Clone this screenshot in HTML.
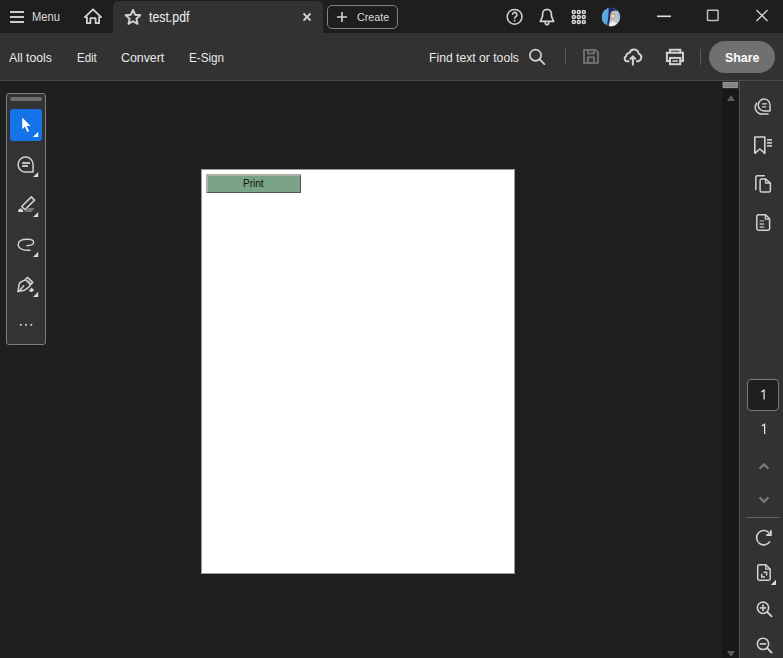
<!DOCTYPE html>
<html><head><meta charset="utf-8">
<style>
*{margin:0;padding:0;box-sizing:border-box}
html,body{width:783px;height:658px;overflow:hidden;background:#1f1f1f;font-family:"Liberation Sans",sans-serif;color:#e6e6e6}
.a{position:absolute}
#title{left:0;top:0;width:783px;height:33px;background:#1e1e1e}
#tab{left:113px;top:1px;width:210px;height:32px;background:#323232;border-radius:5px 5px 0 0}
#toolbar{left:0;top:33px;width:783px;height:47px;background:#323232}
#tbline{left:0;top:80px;width:783px;height:1px;background:#4b4b4b}
.t{position:absolute;white-space:nowrap;line-height:1;transform-origin:0 0}
#ov{position:absolute;left:0;top:0;overflow:visible}
#scroll{left:722px;top:81px;width:17px;height:577px;background:#181818}
#rpanel{left:739px;top:81px;width:44px;height:577px;background:#323232;border-left:1px solid #4f4f4f}
#page{left:201px;top:169px;width:314px;height:405px;background:#fff;border:1px solid #9a9a9a}
#lt{left:6px;top:93px;width:40px;height:252px;background:#333333;border:1px solid #7e7e7e;border-radius:3px}
#create{left:327px;top:5px;width:71px;height:24px;border:1px solid #828282;border-radius:5px}
#share{left:709px;top:41px;width:66px;height:32px;border-radius:16px;background:#707070}
#pbtn{left:206px;top:174px;width:95px;height:19px;background:#7aa385;border-top:2px solid #b3aea6;border-left:2px solid #b3aea6;border-right:1px solid #55524f;border-bottom:1px solid #55524f}
#pinput{left:747px;top:379px;width:32px;height:32px;border:1px solid #7a7a7a;border-radius:4px;background:#1e1e1e}
</style></head><body>
<div id="title" class="a"></div>
<div id="tab" class="a"></div>
<div id="toolbar" class="a"></div>
<div id="tbline" class="a"></div>
<div id="create" class="a"></div>
<div id="share" class="a"></div>

<div id="scroll" class="a"></div>
<div id="rpanel" class="a"></div>
<div id="page" class="a"></div>
<div id="pbtn" class="a"></div>
<div id="lt" class="a"></div>
<div id="pinput" class="a"></div>

<!-- text -->
<div class="t" style="left:32px;top:11px;font-size:12px;color:#dcdcdc;transform:scaleX(.93)">Menu</div>
<div class="t" style="left:149px;top:10px;font-size:14px;color:#eeeeee;transform:scaleX(.88)">test.pdf</div>
<div class="t" style="left:357px;top:12px;font-size:11.5px;color:#dcdcdc;transform:scaleX(.93)">Create</div>

<div class="t" style="left:9px;top:51px;font-size:13.3px;color:#e8e8e8;transform:scaleX(.92)">All tools</div>
<div class="t" style="left:76.5px;top:51px;font-size:13.3px;color:#e8e8e8;transform:scaleX(.86)">Edit</div>
<div class="t" style="left:121px;top:51px;font-size:13.3px;color:#e8e8e8;transform:scaleX(.93)">Convert</div>
<div class="t" style="left:189px;top:51px;font-size:13.3px;color:#e8e8e8;transform:scaleX(.88)">E-Sign</div>
<div class="t" style="left:429px;top:51px;font-size:13.3px;color:#e8e8e8;transform:scaleX(.915)">Find text or tools</div>
<div class="t" style="left:724.5px;top:51px;font-size:13px;font-weight:bold;color:#ffffff;transform:scaleX(.95)">Share</div>

<div class="t" style="left:243px;top:179px;font-size:10px;color:#111">Print</div>


<svg id="ov" width="783" height="658" viewBox="0 0 783 658">
<g fill="none" stroke="#d2d2d2" stroke-width="1.6" stroke-linejoin="round" stroke-linecap="round">
  <!-- hamburger -->
  <path d="M10 12H24M10 17H24M10 22H24" stroke-width="2" stroke-linecap="butt" stroke="#cccccc"/>
  <!-- home -->
  <path d="M93 9.3L84.9 17.1H86.9V23.2H90.4V18.2H95.6V23.2H99.1V17.1H101.1Z" stroke-width="1.8"/>
  <!-- star -->
  <path d="M133.00 9.90 L135.12 14.69 L140.32 15.22 L136.42 18.71 L137.53 23.83 L133.00 21.20 L128.47 23.83 L129.58 18.71 L125.68 15.22 L130.88 14.69 Z" stroke-width="1.9"/>
  <!-- tab close -->
  <path d="M303.5 13.5L310.5 20.5M310.5 13.5L303.5 20.5" stroke-width="1.8" stroke-linecap="butt"/>
  <!-- create plus -->
  <path d="M342 12V22M337 17H347" stroke-width="1.6" stroke-linecap="butt"/>
  <!-- help -->
  <circle cx="514.6" cy="16.8" r="7.4" stroke-width="1.5"/>
  <path d="M512.5 14.7A2.2 2.2 0 1 1 515.7 16.6C514.9 17.1 514.6 17.5 514.6 18.7" stroke-width="1.6" stroke-linecap="butt"/><circle cx="514.6" cy="20.6" r="0.95" fill="#d2d2d2" stroke="none"/>
  <!-- bell -->
  <path d="M540.4 21.4L542.6 16V13.8A4.4 4.4 0 0 1 551.4 13.8V16L553.6 21.4Z" stroke-width="1.7"/>
  <path d="M545.2 22.2A1.8 2.5 0 0 0 548.8 22.2" stroke-width="1.6"/>
  <!-- window controls -->
  <path d="M657 16.3H671" stroke-width="1.6" stroke-linecap="butt" stroke="#e0e0e0"/>
  <rect x="707.5" y="10.2" width="10.6" height="10.2" stroke-width="1.5" stroke="#bdbdbd" rx="0.5"/>
  <path d="M756.5 10L767.5 21M767.5 10L756.5 21" stroke-width="1.3" stroke-linecap="butt" stroke="#cfd8cf"/>
  <!-- search -->
  <circle cx="535.5" cy="55.2" r="5.6" stroke-width="1.7"/>
  <path d="M539.7 59.4L544.4 64.1" stroke-width="1.8"/>
  <!-- separators -->
  <path d="M565.5 49V65M700.5 49V65" stroke="#5a5a5a" stroke-width="1" stroke-linecap="butt"/>
  <!-- save (disabled) -->
  <g stroke="#6e6e6e" stroke-width="2" stroke-linejoin="round">
    <path d="M584 50H595.5L598 52.5V63H584Z"/>
    <path d="M588 50.2V53.5H594V50.2"/>
    <path d="M588 62.8V57.3H594V62.8"/>
  </g>
  <!-- upload -->
  <path d="M628.6 61.2H627.2A2.6 2.6 0 0 1 626.3 56.2A3 3 0 0 1 629.6 52.9A4.6 4.6 0 0 1 638.6 53.6A3.9 3.9 0 0 1 637.8 61.2H636.9" stroke-width="1.9"/>
  <path d="M632.85 65.6V57.2M629.9 59.4L632.85 56.4L635.8 59.4" stroke-width="2" stroke-linecap="butt"/>
  <!-- print -->
  <g stroke-width="2" stroke-linejoin="miter">
    <path d="M670 52.2V49.8H680.3V52.2"/>
    <path d="M669.9 61.1H666.9V52.8H683V61.1H680.1"/>
    <rect x="670" y="57.9" width="10.3" height="6.3"/>
  </g>
  <path d="M672.3 61H677.9" stroke-width="1.8" stroke="#bdbdbd" stroke-linecap="butt"/>

  <!-- left toolbar -->
  <rect x="10" y="97" width="32" height="4" rx="2" fill="#6e6e6e" stroke="none"/>
  <rect x="10" y="109" width="32" height="32" rx="3" fill="#1473e6" stroke="none"/>
  <path d="M22.2 117.6V129.2L24.8 126.6L27.4 132L29.1 131.2L26.6 125.9H30.6Z" fill="#ffffff" stroke="none"/>
  <path d="M33 137H38.2V131.8Z" fill="#ffffff" stroke="none"/>
  <!-- comment -->
  <path d="M33.1 172.1H25.7A7.5 7.5 0 1 1 33.1 164.6Z" stroke-width="1.5"/>
  <path d="M22.2 163H30M22.2 166H28" stroke="#c7c3bd" stroke-width="1.8" stroke-linecap="butt"/>
  <path d="M33 176.9H38.2V171.9Z" fill="#d8d8d8" stroke="none"/>
  <!-- highlighter -->
  <path d="M31.3 196.9L34.5 200.1L24.9 209.7L21.7 206.5Z" stroke-width="1.6"/>
  <path d="M18 212H23.2C23.2 210 21.8 208.6 20.6 208.6C19.2 208.6 18 210 18 212Z" fill="#d8d8d8" stroke="none"/>
  <path d="M27.8 208H34.8L31.3 212H24.3Z" fill="#777777" stroke="none"/>
  <path d="M33 216.9H38.2V211.9Z" fill="#d8d8d8" stroke="none"/>
  <!-- lasso -->
  <path d="M30 250.2C25 250.6 18.2 249.3 18.2 244.4C18.2 240.7 23 239.3 27.6 239.3C31.2 239.3 33.6 240.4 33.6 242.3C33.6 244.8 29.4 245.7 27 245.8" stroke-width="1.4"/>
  <path d="M33 257H38.2V251.8Z" fill="#d8d8d8" stroke="none"/>
  <!-- pen -->
  <path d="M25.3 279.5L27.5 277.4L32.8 282.4L30.6 284.6Z" stroke-width="1.5"/>
  <path d="M27.7 280.2L30.5 282.8" stroke-width="1"/>
  <path d="M25.4 279.9L21.2 281.7Q19.6 282.4 19.2 284L17.9 291.6L24.6 290.2L28.8 287.2Q29.9 286.2 30.2 284.4" stroke-width="1.5"/>
  <path d="M18.7 291.4L23.6 285.9" stroke-width="1.5"/>
  <path d="M28.8 290.9L31.6 287.4L34.3 290.4L31.4 291.9Z" fill="#d8d8d8" stroke="none"/>
  <path d="M33 297H38.2V291.8Z" fill="#d8d8d8" stroke="none"/>
  <!-- dots -->
  <g fill="#c8c8c8" stroke="none"><circle cx="20.8" cy="324.8" r="1.1"/><circle cx="26" cy="324.8" r="1.1"/><circle cx="31.3" cy="324.8" r="1.1"/></g>

  <!-- scrollbar -->
  <rect x="722" y="81" width="17" height="8" fill="#2a2a32" stroke="none"/><rect x="723" y="82" width="15" height="6" fill="#848484" stroke="none"/><rect x="723.5" y="82.5" width="14" height="5" fill="none" stroke="#929292" stroke-width="1"/>
  <path d="M727 101H735L731 95Z" fill="#5c5c5c" stroke="none"/>
  <path d="M727 651H735L731 657Z" fill="#5c5c5c" stroke="none"/>

  <!-- right panel icons -->
  <path d="M770 110.9H764.3A5.9 5.9 0 1 1 770 105Z" stroke-width="1.5"/>
  <path d="M762 103.8H767M762 106.8H766.2" stroke-width="1.2" stroke-linecap="butt"/>
  <path d="M756.6 103.3A6.8 6.8 0 0 0 762 114.1H768" stroke-width="1.5"/>

  <path d="M754.8 137V153.3L759.8 149L764.8 153.3V137Z" stroke-width="1.6"/>
  <path d="M767 139.9H772M767 142.9H772M767 145.9H772" stroke="#c7c3bd" stroke-width="1.7" stroke-linecap="butt"/>

  <path d="M755.8 189.6V177.3A1.6 1.6 0 0 1 757.4 175.7H764.3" stroke-width="1.5"/>
  <path d="M765.6 178.9H761.7A1.6 1.6 0 0 0 760.1 180.5V190.4A1.6 1.6 0 0 0 761.7 192H768.8A1.6 1.6 0 0 0 770.4 190.4V183.4Z" stroke-width="1.5"/>
  <path d="M765.5 179V183H770.3" stroke-width="1.3"/>

  <path d="M765.5 214.8H758.4A1.6 1.6 0 0 0 756.8 216.4V228.6A1.6 1.6 0 0 0 758.4 230.2H768A1.6 1.6 0 0 0 769.6 228.6V218.9Z" stroke-width="1.5"/>
  <path d="M765.3 214.9V219.1H769.5" stroke-width="1.2"/>
  <path d="M759.6 220.9H764.2" stroke="#8e8e8e" stroke-width="1.6" stroke-linecap="butt"/><path d="M759.6 224H764.2" stroke="#a6b4a6" stroke-width="1.6" stroke-linecap="butt"/><path d="M759.6 227.1H764.2" stroke="#b4aea6" stroke-width="1.6" stroke-linecap="butt"/>

  <path d="M761.4 391.9L764.1 390.2V399.4M761.9 425.9L764.6 424.3V434.1" stroke="#e4e4e4" stroke-width="1.25" stroke-linecap="butt" stroke-linejoin="miter"/>
  <!-- chevrons -->
  <path d="M759.6 468.8L764 464.4L768.4 468.8M759.6 497.4L764 501.8L768.4 497.4" stroke="#7a7a7a" stroke-width="2.3" stroke-linecap="butt" stroke-linejoin="miter"/>
  <path d="M747 517.5H780" stroke="#626262" stroke-width="1"/>

  <!-- rotate -->
  <path d="M770 541.4A7.2 7.2 0 1 1 769.6 533.4" stroke-width="1.6" stroke-linecap="butt"/>
  <path d="M766.3 535H770.9V530.2" stroke-width="1.8" stroke-linejoin="miter" stroke-linecap="butt"/>
  <!-- fit page -->
  <path d="M765.8 564.8H759.3A1.6 1.6 0 0 0 757.7 566.4V578.6A1.6 1.6 0 0 0 759.3 580.2H768.6A1.6 1.6 0 0 0 770.2 578.6V569.2Z" stroke-width="1.5"/>
  <path d="M765.8 564.9V569.2H770.1" stroke-width="1.3"/>
  <path d="M761.7 573.8V577H765M763.5 572.3H766.6V575.4" stroke-width="1.5" stroke-linecap="butt" stroke-linejoin="miter"/>
  <path d="M770.8 585H776V579.8Z" fill="#d8d8d8" stroke="none"/>
  <!-- zoom in/out -->
  <circle cx="763" cy="607.8" r="5.65" stroke-width="1.6"/>
  <path d="M767.2 612L771.6 616.4" stroke-width="1.8"/>
  <path d="M763 604.6V611M759.8 607.8H766.2" stroke="#c7c3bd" stroke-width="1.8" stroke-linecap="butt"/>
  <circle cx="763" cy="643.9" r="5.65" stroke-width="1.6"/>
  <path d="M767.2 648.1L771.6 652.5" stroke-width="1.8"/>
  <path d="M759.8 643.9H766.2" stroke="#c7c3bd" stroke-width="1.8" stroke-linecap="butt"/>
</g>
<!-- grid -->
<g fill="none" stroke="#d6d6d6" stroke-width="1.5">
  <circle cx="573.8" cy="12" r="1.55"/><circle cx="578.8" cy="12" r="1.55"/><circle cx="583.8" cy="12" r="1.55"/>
  <circle cx="573.8" cy="17" r="1.55"/><circle cx="578.8" cy="17" r="1.55"/><circle cx="583.8" cy="17" r="1.55"/>
  <circle cx="573.8" cy="22" r="1.55"/><circle cx="578.8" cy="22" r="1.55"/><circle cx="583.8" cy="22" r="1.55"/>
</g>
<!-- avatar -->
<defs><clipPath id="av"><circle cx="611" cy="17" r="9.2"/></clipPath></defs>
<g clip-path="url(#av)">
  <rect x="601" y="7" width="20" height="20" fill="#b9c2cf"/>
  <path d="M601 7H609L608.5 13L608 20L606.5 27H601Z" fill="#5aa8e0"/>
  <path d="M608.5 7H618L617.5 11L614 10.5L611 12L610 19L608.5 27H606.5L608 19L608.5 12Z" fill="#1d2b6c"/>
  <path d="M617.5 12L621 11V20L618.5 19Z" fill="#8ec0e6"/>
  <ellipse cx="612.8" cy="16.2" rx="2.6" ry="3.4" fill="#c7a991"/>
  <path d="M611.8 14.8H614.2V17.4H611.8Z" fill="#e8e4de"/>
  <path d="M608.5 27C609 23.5 610.5 21.3 613 21.3C615.5 21.3 617.5 23.5 618.5 27Z" fill="#ecedef"/>
</g>
</svg>
</body></html>
